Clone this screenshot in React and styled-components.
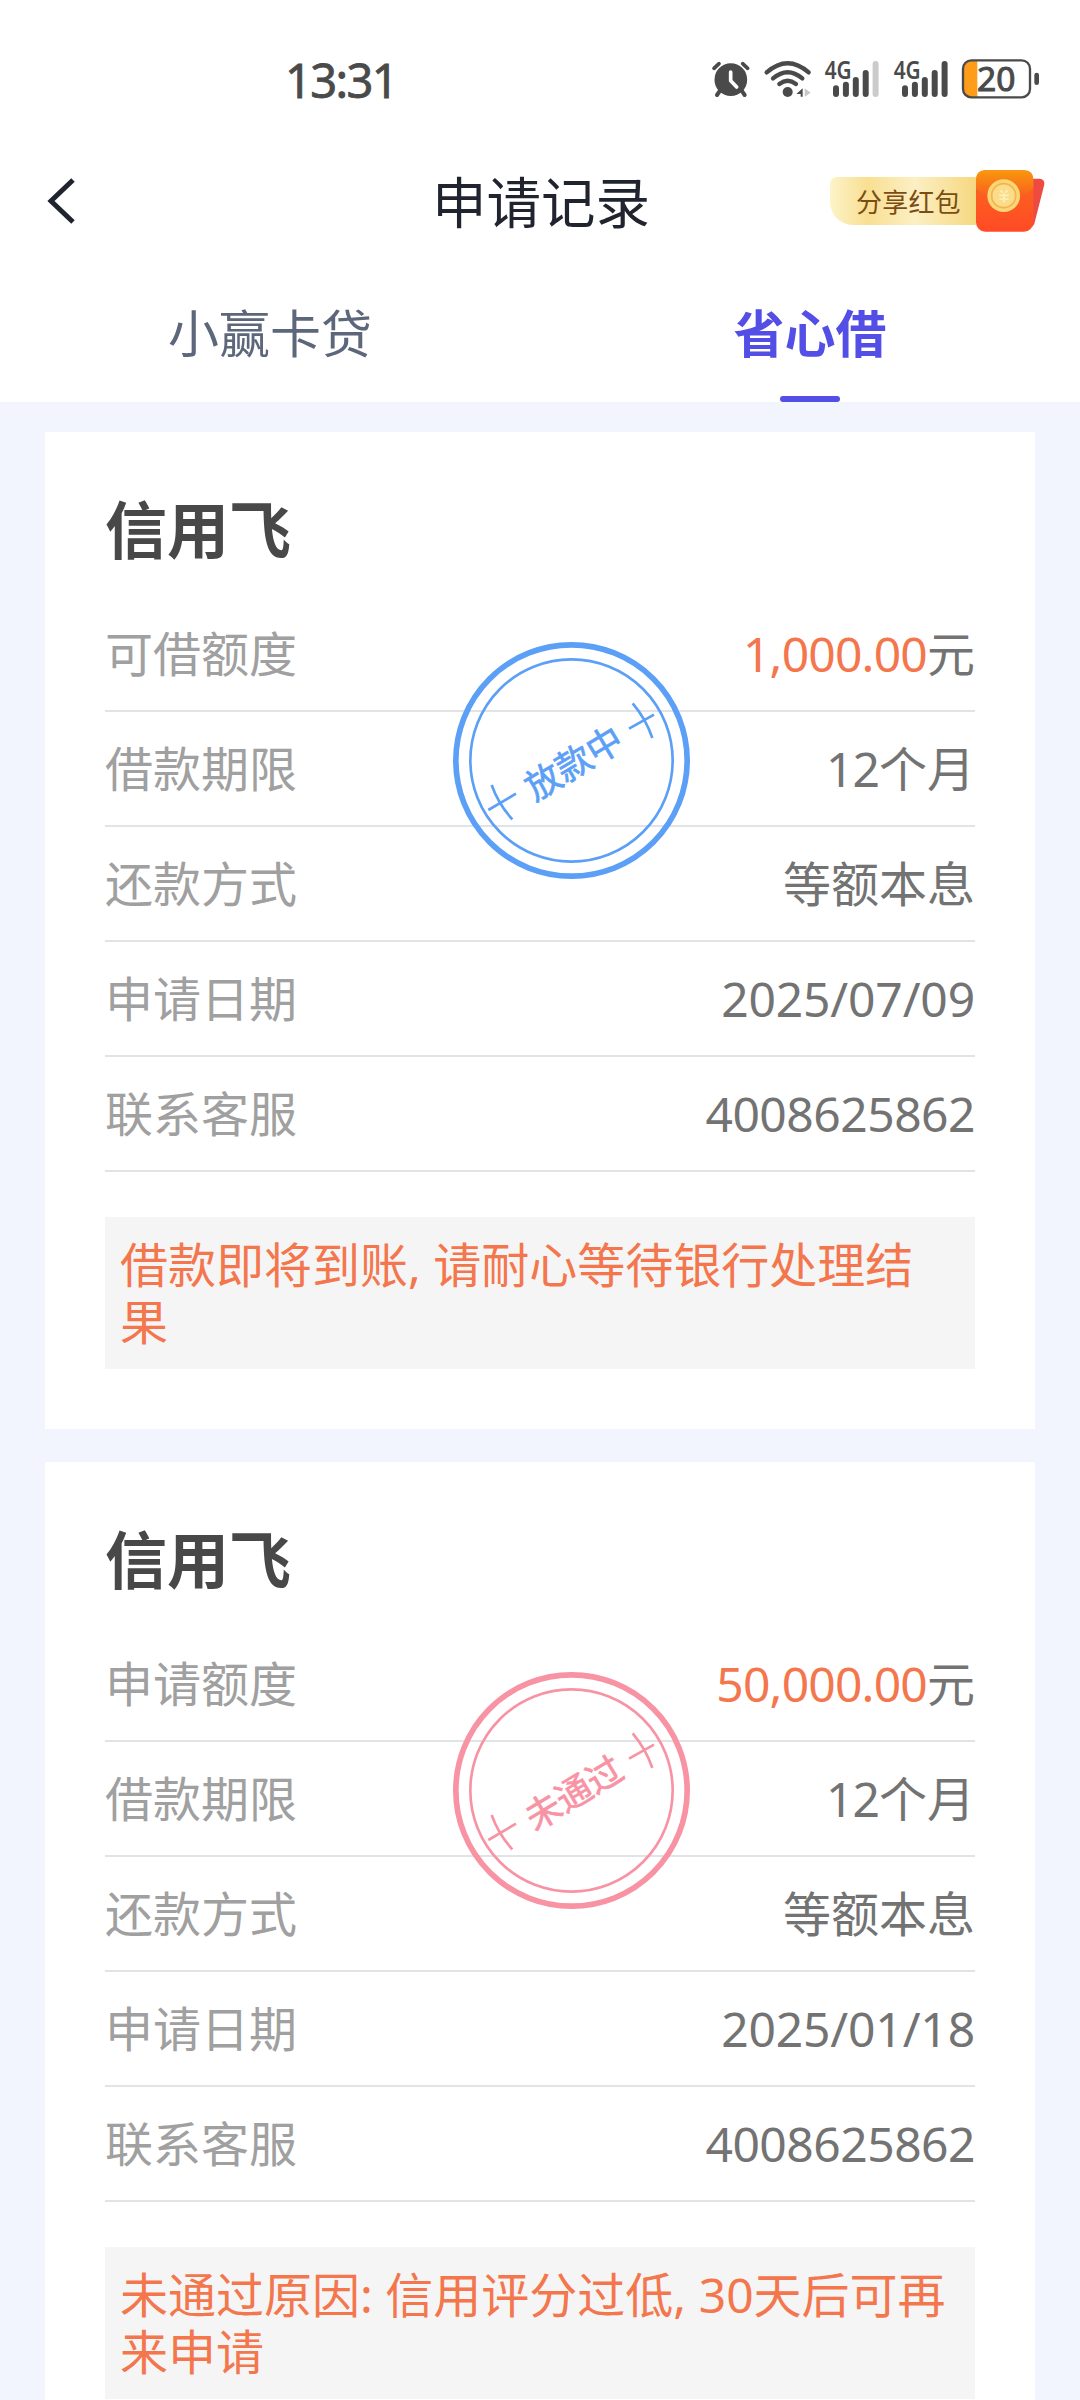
import React from 'react';
import styled, { createGlobalStyle } from 'styled-components';

const GlobalStyle = createGlobalStyle`
  * {
    box-sizing: border-box;
  }

  body {
    margin: 0;
    background: #f2f5fd;
    font-family: 'Noto Sans', 'Noto Sans CJK SC', sans-serif;
  }
`;

const Page = styled.div`
  width: 1080px;
  height: 2400px;
  overflow: hidden;
  background: #f2f5fd;
`;

const Top = styled.header`
  height: 402px;
  background: #fff;
`;

const StatusBar = styled.div`
  height: 134px;
  padding: 24px 40px 0 285px;
  display: flex;
  align-items: center;
  justify-content: space-between;
`;

const Clock = styled.span`
  padding-top: 2px;
  font-size: 47px;
  line-height: 50px;
  letter-spacing: -1.6px;
  color: #4a4a4a;
  -webkit-text-stroke: 0.8px #4a4a4a;
`;

const StatusIcons = styled.div`
  display: flex;
  gap: 13.33px;

  svg {
    display: block;
    height: 40px;
    overflow: visible;
  }
`;

const NavBar = styled.div`
  height: 134px;
  padding: 0 35px;
  display: grid;
  grid-template-columns: 1fr auto 1fr;
  align-items: center;
`;

const BackButton = styled.button`
  padding: 0 0 0 10px;
  border: none;
  background: none;
  justify-self: start;
  cursor: pointer;

  svg {
    display: block;
  }
`;

const PageTitle = styled.h1`
  margin: 0;
  padding: 2px 0 0 2px;
  font-size: 54.5px;
  font-weight: 400;
  line-height: 60px;
  color: #20242f;
`;

const ShareButton = styled.a`
  justify-self: end;
  display: flex;
  align-items: center;
`;

const ShareLabel = styled.span`
  width: 146px;
  height: 48px;
  padding-left: 26px;
  border-radius: 7px 0 0 23px;
  background: linear-gradient(90deg, #fdf3c8 0%, #f8df92 26%, #fcefc4 58%, #f6d880 100%);
  font-size: 26px;
  line-height: 51px;
  letter-spacing: 0.2px;
  color: #7b4d13;
  white-space: nowrap;
`;

const Tabs = styled.nav`
  height: 134px;
  display: flex;
`;

const Tab = styled.a`
  flex: 1;
  padding-top: 2px;
  display: flex;
  flex-direction: column;
  align-items: center;
  font-size: 51px;
  font-weight: ${({ $active }) => ($active ? 700 : 400)};
  line-height: 126px;
  color: ${({ $active }) => ($active ? '#524ee6' : '#5d677b')};

  &::after {
    content: '';
    width: 60px;
    height: 6px;
    border-radius: 3px;
    background: ${({ $active }) => ($active ? '#524ee6' : 'transparent')};
  }
`;

const List = styled.main`
  padding: 30px 45px 0;
  display: flex;
  flex-direction: column;
  gap: 33px;
`;

const Card = styled.section`
  position: relative;
  padding: 68px 60px 60px;
  background: #fff;
`;

const CardTitle = styled.h2`
  margin: 0 0 37px;
  font-size: 62px;
  font-weight: 700;
  line-height: 60px;
  color: #484848;
`;

const Row = styled.div`
  height: 115px;
  border-bottom: 2px solid #e1e4e6;
  display: flex;
  align-items: center;
  justify-content: space-between;
  font-size: 48px;
  line-height: 60px;
`;

const Label = styled.span`
  color: #a0a0a0;
`;

const Value = styled.span`
  letter-spacing: ${({ $spacing }) => $spacing || '0'};
  color: #737373;
`;

const Amount = styled.span`
  letter-spacing: -0.8px;
  color: #f4764d;
`;

const Months = styled.span`
  letter-spacing: -1px;
`;

const Notice = styled.p`
  margin: 45px 0 0;
  padding: 19px 15px;
  background: #f5f5f5;
  font-size: 48px;
  line-height: 57px;
  color: #f4764d;
`;

// sits over the first rows of the card
const Stamp = styled.svg`
  position: absolute;
  top: 210px;
  left: 408px;
  width: 237px;
  height: 237px;
  color: ${({ $tone }) => ($tone === 'blue' ? '#5c9ff6' : '#f893a4')};
`;

const AlarmIcon = () => (
  <svg width="40" viewBox="62 57 120 120" fill="none" stroke="#4a4a4a" strokeLinecap="round">
    <circle cx="121.500" cy="119" r="49" fill="#4a4a4a" stroke="none" />
    <path d="M71 85L86 71M172 85L157 71" strokeWidth="11" />
    <path d="M89 152L80 165M154 152L163 165" strokeWidth="12" />
    <path d="M121 96V122L139 141" stroke="#fff" strokeWidth="11" strokeLinejoin="round" />
  </svg>
);

const WifiIcon = () => (
  <svg width="48" viewBox="221 57 144 120" fill="none" stroke="#4a4a4a" strokeWidth="13" strokeLinecap="round">
    <path d="M229 97Q292 42 355 97" />
    <path d="M248 115Q292 78 336 115" />
    <path d="M267 132Q292 113 317 132" />
    <circle cx="292" cy="156" r="15" fill="#4a4a4a" stroke="none" />
    <path d="M337 145V170H331V162H318Z" fill="#4a4a4a" stroke="none" />
    <path d="M343 145L361 158L343 170Z" fill="#c8c8c8" stroke="none" />
  </svg>
);

const SignalIcon = ({ bars }) => (
  <svg width="55" viewBox="405 57 165 120">
    <text x="404" y="117" fontSize="73" fontWeight="600" fill="#4a4a4a" textLength="81" lengthAdjust="spacingAndGlyphs">
      4G
    </text>
    {[136, 125, 111, 90, 63].map((top, i) => (
      <rect
        key={top}
        x={429 + i * 29.7}
        y={top}
        width="18"
        height={171 - top}
        rx="9"
        fill={i < bars ? '#4a4a4a' : '#cbcbcb'}
      />
    ))}
  </svg>
);

const BatteryIcon = ({ level }) => (
  <svg width="78" viewBox="815 57 234 120">
    <path d="M861 63V171H842Q819 171 819 148V86Q819 63 842 63Z" fill="#ff9c1a" />
    <rect x="818" y="61" width="201" height="111" rx="25" fill="none" stroke="#4a4a4a" strokeWidth="7" />
    <rect x="1032" y="98" width="14" height="37" rx="7" fill="#4a4a4a" />
    <text
      x="860"
      y="153"
      fontSize="98"
      fill="#4a4a4a"
      stroke="#4a4a4a"
      strokeWidth="3"
      textLength="115"
      lengthAdjust="spacingAndGlyphs"
    >
      {level}
    </text>
  </svg>
);

const EnvelopeIcon = () => (
  <svg width="69" height="62" viewBox="497 61 207 186">
    <defs>
      <linearGradient id="packet" x1="0" y1="0" x2="0" y2="1">
        <stop offset="0" stopColor="#fb6a1c" />
        <stop offset="1" stopColor="#ff4a26" />
      </linearGradient>
      <linearGradient id="flap" x1="0" y1="0" x2="0" y2="1">
        <stop offset="0" stopColor="#f9980d" />
        <stop offset="1" stopColor="#f95522" />
      </linearGradient>
    </defs>
    <path d="M655 87H688Q706 89 701 108L672 222Q668 232 660 234L640 200Z" fill="#ee4a41" />
    <rect x="497" y="62" width="172" height="184" rx="28" fill="url(#packet)" />
    <path d="M497 117V90Q497 62 525 62H641Q669 62 669 90V117Q630 152 583 154Q536 152 497 117Z" fill="url(#flap)" />
    <circle cx="580" cy="138" r="49" fill="#fbd679" />
    <circle cx="580" cy="138" r="36" fill="#fbdc8a" stroke="#f3b64c" strokeWidth="5" />
    <path
      d="M570 122L577 129M592 122L585 129M567 137H595M567 148H595M581 131V158"
      fill="none"
      stroke="#fff0bd"
      strokeWidth="5"
    />
  </svg>
);

const StatusStamp = ({ tone, text }) => (
  <Stamp $tone={tone} viewBox="69 66 711 711" fill="none" stroke="currentColor">
    <circle cx="424.500" cy="421.500" r="347" strokeWidth="17" />
    <circle cx="424.500" cy="421.500" r="303.500" strokeWidth="8" />
    <path d="M175 570L258 521M185 495Q205 552 247 598" strokeWidth="8" />
    <path d="M597 326L672 284M608 250Q648 297 667 354" strokeWidth="8" />
    <text
      transform="translate(431 428) rotate(-31)"
      y="40"
      fontSize="107"
      textAnchor="middle"
      fill="currentColor"
      stroke="currentColor"
      strokeWidth="2"
    >
      {text}
    </text>
  </Stamp>
);

const records = [
  {
    id: 1,
    name: '信用飞',
    amountLabel: '可借额度',
    amount: '1,000.00',
    months: 12,
    date: '2025/07/09',
    tone: 'blue',
    status: '放款中',
    notice: '借款即将到账, 请耐心等待银行处理结果',
  },
  {
    id: 2,
    name: '信用飞',
    amountLabel: '申请额度',
    amount: '50,000.00',
    months: 12,
    date: '2025/01/18',
    tone: 'pink',
    status: '未通过',
    notice: '未通过原因: 信用评分过低, 30天后可再来申请',
  },
];

const RecordCard = ({ record }) => (
  <Card>
    <CardTitle>{record.name}</CardTitle>
    <Row>
      <Label>{record.amountLabel}</Label>
      <Value>
        <Amount>{record.amount}</Amount>元
      </Value>
    </Row>
    <Row>
      <Label>借款期限</Label>
      <Value>
        <Months>{record.months}</Months>个月
      </Value>
    </Row>
    <Row>
      <Label>还款方式</Label>
      <Value>等额本息</Value>
    </Row>
    <Row>
      <Label>申请日期</Label>
      <Value $spacing="-0.15px">{record.date}</Value>
    </Row>
    <Row>
      <Label>联系客服</Label>
      <Value $spacing="-0.5px">4008625862</Value>
    </Row>
    <Notice>{record.notice}</Notice>
    <StatusStamp tone={record.tone} text={record.status} />
  </Card>
);

const App = () => {
  return (
    <>
      <GlobalStyle />
      <Page>
        <Top>
          <StatusBar>
            <Clock>13:31</Clock>
            <StatusIcons>
              <AlarmIcon />
              <WifiIcon />
              <SignalIcon bars={4} />
              <SignalIcon bars={5} />
              <BatteryIcon level={20} />
            </StatusIcons>
          </StatusBar>
          <NavBar>
            <BackButton aria-label="返回">
              <svg width="34" height="50" viewBox="0 0 34 50" fill="none" stroke="#20242f" strokeWidth="5">
                <path d="M28 4L6 25L28 46" />
              </svg>
            </BackButton>
            <PageTitle>申请记录</PageTitle>
            <ShareButton>
              <ShareLabel>分享红包</ShareLabel>
              <EnvelopeIcon />
            </ShareButton>
          </NavBar>
          <Tabs>
            <Tab>小赢卡贷</Tab>
            <Tab $active>省心借</Tab>
          </Tabs>
        </Top>
        <List>
          {records.map((record) => (
            <RecordCard key={record.id} record={record} />
          ))}
        </List>
      </Page>
    </>
  );
};

export default App;
